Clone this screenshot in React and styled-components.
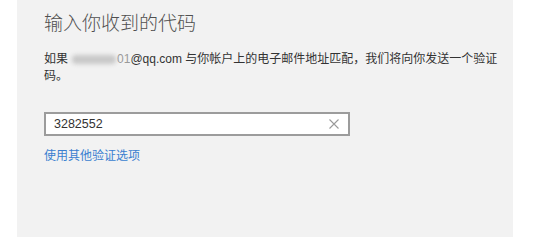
import React from 'react';
import styled, { createGlobalStyle } from 'styled-components';

const GlobalStyle = createGlobalStyle`
  html, body {
    margin: 0;
    padding: 0;
    background: #ffffff;
  }
`;

const Page = styled.div`
  width: 533px;
  height: 237px;
  display: flex;
  font-family: "Liberation Sans", "Noto Sans CJK SC", sans-serif;
`;

const Panel = styled.div`
  margin-left: 17px;
  width: 496px;
  height: 237px;
  box-sizing: border-box;
  padding: 10px 0 0 27px;
  background: #f2f2f2;
  display: flex;
  flex-direction: column;
  align-items: flex-start;
`;

const Title = styled.h1`
  margin: 0;
  font-family: "Noto Sans CJK SC", sans-serif;
  font-size: 19px;
  font-weight: 300;
  line-height: 23px;
  color: #505050;
`;

const Message = styled.p`
  margin: 18px 0 0;
  width: 466px;
  font-size: 12px;
  line-height: 17px;
  color: #333;
`;

const Masked = styled.span`
  display: inline-block;
  width: 44px;
  height: 9px;
  margin: 0 1px 0 4px;
  vertical-align: -1px;
  background: #c8c8c8;
  border-radius: 4px;
  filter: blur(2px);
`;

const Faint = styled.span`
  color: #9a9a9a;
`;

const Field = styled.div`
  margin-top: 27px;
  width: 306px;
  height: 24px;
  box-sizing: border-box;
  border: 2px solid #9c9c9c;
  background: #fff;
  display: flex;
  align-items: center;
  padding: 0 8px 0 8px;
`;

const Input = styled.input`
  flex: 1;
  border: none;
  outline: none;
  padding: 0;
  background: transparent;
  font-family: "Liberation Sans", sans-serif;
  font-size: 12.5px;
  color: #333;
`;

const Clear = styled.span`
  display: flex;
  width: 12px;
  height: 12px;
`;

const Link = styled.a`
  margin-top: 11px;
  font-size: 12px;
  line-height: 18px;
  color: #3a7fd0;
  text-decoration: none;
`;

const App = () => (
  <Page>
    <GlobalStyle />
    <Panel>
      <Title>输入你收到的代码</Title>
      <Message>
        如果<Masked /><Faint>01</Faint>@qq.com 与你帐户上的电子邮件地址匹配，我们将向你发送一个验证码。
      </Message>
      <Field>
        <Input defaultValue="3282552" readOnly />
        <Clear>
          <svg width="12" height="12" viewBox="0 0 12 12">
            <path d="M1.5 1.5 L10.5 10.5 M10.5 1.5 L1.5 10.5" stroke="#9a9a9a" strokeWidth="1.1" fill="none" />
          </svg>
        </Clear>
      </Field>
      <Link href="#">使用其他验证选项</Link>
    </Panel>
  </Page>
);

export default App;
